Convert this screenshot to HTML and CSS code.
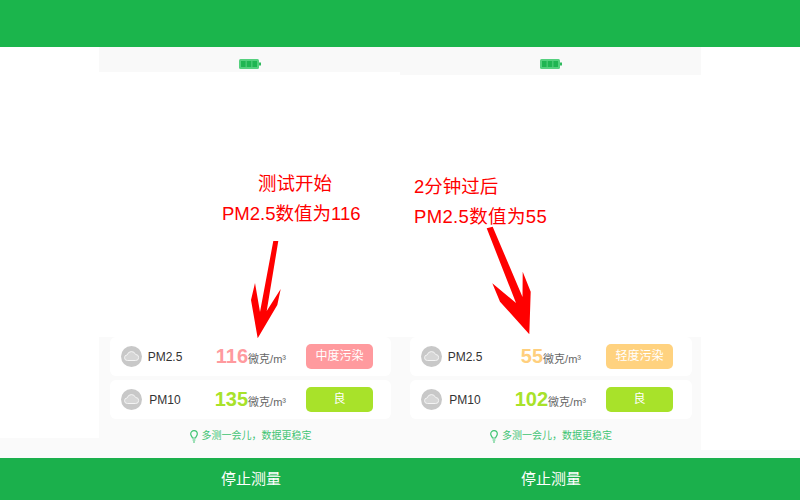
FILE: index.html
```html
<!DOCTYPE html>
<html lang="zh-CN">
<head>
    <meta charset="UTF-8">
    <title>PM2.5 测量</title>
    <link rel="stylesheet" href="styles.css">
</head>
<body>
    <div class="topbar"></div>

    <div class="main">
        <div class="side side-left"></div>

        <div class="panel panel-left">
            <div class="strip">
                <svg class="battery" viewBox="0 0 22 10"><rect width="20" height="10" rx="1.5" fill="#55d07e"/><rect x="2" y="2" width="4.6" height="6" fill="#1fb552"/><rect x="7.7" y="2" width="4.6" height="6" fill="#1fb552"/><rect x="13.4" y="2" width="4.6" height="6" fill="#1fb552"/><rect x="20" y="3.5" width="2" height="3" fill="#2fbb5e"/></svg>
            </div>
            <div class="note">
                <p class="note-first">测试开始</p>
                <p>PM2.5数值为116</p>
            </div>
            <svg class="arrow arrow-left" viewBox="250 240 32 100"><polygon points="273.3,241 278.3,241 266.7,311 280.7,289 277.3,305 257.7,338.3 251,300 255,283 260,312"/></svg>
            <div class="readings">
                <div class="card">
                    <svg class="cloud" viewBox="0 0 21 21"><circle cx="10.5" cy="10.5" r="10.5" fill="#c8c8c8"/><path d="M6.5 14.5a2.8 2.8 0 0 1-.3-5.6 4.4 4.4 0 0 1 8.4-.4 3 3 0 0 1 .1 6z" fill="#d6d6d6" stroke="#f4f4f4" stroke-width="1"/></svg>
                    <span class="name">PM2.5</span>
                    <span class="reading"><b class="num pink">116</b>微克/m³</span>
                    <span class="badge bg-pink">中度污染</span>
                </div>
                <div class="card">
                    <svg class="cloud" viewBox="0 0 21 21"><circle cx="10.5" cy="10.5" r="10.5" fill="#c8c8c8"/><path d="M6.5 14.5a2.8 2.8 0 0 1-.3-5.6 4.4 4.4 0 0 1 8.4-.4 3 3 0 0 1 .1 6z" fill="#d6d6d6" stroke="#f4f4f4" stroke-width="1"/></svg>
                    <span class="name">PM10</span>
                    <span class="reading"><b class="num lime">135</b>微克/m³</span>
                    <span class="badge bg-lime">良</span>
                </div>
                <div class="hint">
                    <svg class="pin" viewBox="0 0 8 13"><path d="M4 .7a3.3 3.3 0 0 1 3.3 3.3c0 1.500-1.300 2.500-1.800 4H2.500C2 6.500.7 5.500.7 4A3.300 3.300 0 0 1 4 .7z" fill="none" stroke="#3fc472" stroke-width="1.200"/><path d="M2.600 10h2.800M3 12h2" stroke="#3fc472" stroke-width="1.200"/></svg>
                    多测一会儿，数据更稳定
                </div>
            </div>
        </div>

        <div class="panel panel-right">
            <div class="strip">
                <svg class="battery" viewBox="0 0 22 10"><rect width="20" height="10" rx="1.5" fill="#55d07e"/><rect x="2" y="2" width="4.6" height="6" fill="#1fb552"/><rect x="7.7" y="2" width="4.6" height="6" fill="#1fb552"/><rect x="13.4" y="2" width="4.6" height="6" fill="#1fb552"/><rect x="20" y="3.5" width="2" height="3" fill="#2fbb5e"/></svg>
            </div>
            <div class="note">
                <p>2分钟过后</p>
                <p class="note-wide">PM2.5数值为55</p>
            </div>
            <svg class="arrow arrow-right" viewBox="486 226 46 110"><polygon points="486.7,228.3 492.7,226.7 522.5,297 522.7,271.7 530.7,291.7 529.3,334.3 500,301.7 492.3,283.3 516,303"/></svg>
            <div class="readings">
                <div class="card">
                    <svg class="cloud" viewBox="0 0 21 21"><circle cx="10.5" cy="10.5" r="10.5" fill="#c8c8c8"/><path d="M6.5 14.5a2.8 2.8 0 0 1-.3-5.6 4.4 4.4 0 0 1 8.4-.4 3 3 0 0 1 .1 6z" fill="#d6d6d6" stroke="#f4f4f4" stroke-width="1"/></svg>
                    <span class="name">PM2.5</span>
                    <span class="reading reading-short"><b class="num amber">55</b>微克/m³</span>
                    <span class="badge bg-amber">轻度污染</span>
                </div>
                <div class="card">
                    <svg class="cloud" viewBox="0 0 21 21"><circle cx="10.5" cy="10.5" r="10.5" fill="#c8c8c8"/><path d="M6.5 14.5a2.8 2.8 0 0 1-.3-5.6 4.4 4.4 0 0 1 8.4-.4 3 3 0 0 1 .1 6z" fill="#d6d6d6" stroke="#f4f4f4" stroke-width="1"/></svg>
                    <span class="name">PM10</span>
                    <span class="reading"><b class="num lime">102</b>微克/m³</span>
                    <span class="badge bg-lime">良</span>
                </div>
                <div class="hint">
                    <svg class="pin" viewBox="0 0 8 13"><path d="M4 .7a3.3 3.3 0 0 1 3.3 3.3c0 1.500-1.300 2.500-1.800 4H2.500C2 6.500.7 5.500.7 4A3.300 3.300 0 0 1 4 .7z" fill="none" stroke="#3fc472" stroke-width="1.200"/><path d="M2.600 10h2.800M3 12h2" stroke="#3fc472" stroke-width="1.200"/></svg>
                    多测一会儿，数据更稳定
                </div>
            </div>
        </div>

        <div class="side side-right"></div>
    </div>

    <div class="footer">
        <div class="stop">停止测量</div>
        <div class="stop">停止测量</div>
    </div>
</body>
</html>
```

FILE: styles.css
```css
* {
    box-sizing: border-box;
}
body {
    display: flex;
    flex-direction: column;
    width: 800px;
    height: 500px;
    margin: 0;
    overflow: hidden;
    background-color: #fff;
    font-family: "Liberation Sans", "Noto Sans CJK SC", sans-serif;
}
.topbar {
    height: 47px;
    background-color: #1bb54c;
}
.main {
    display: grid;
    grid-template-columns: 99px 301px 301px 99px;
    height: 411px;
}
.side-left {
    background: linear-gradient(to bottom, #fff 391px, #fafafa 391px);
}
.side-right {
    background: linear-gradient(to bottom, #fff 403px, #fafafa 403px);
}
.panel {
    position: relative;
    display: flex;
    flex-direction: column;
    background-color: #fff;
}
.strip {
    display: flex;
    justify-content: center;
    height: 25px;
    padding: 12px 0 0 1px;
    background-color: #f9f9f9;
}
.panel-right .strip {
    height: 28px;
}
.battery {
    width: 22px;
    height: 10px;
}
.note {
    flex: 1;
    padding: 97px 0 0 123px;
    color: #f00;
    font-size: 18.5px;
    line-height: 30px;
}
.note p {
    margin: 0;
}
.note .note-first {
    padding-left: 36px;
}
.note .note-wide {
    letter-spacing: .35px;
}
.panel-right .note {
    padding-left: 14px;
}
.arrow {
    position: absolute;
    fill: #f00;
}
.arrow-left {
    left: 151px;
    top: 193px;
    width: 32px;
    height: 100px;
}
.arrow-right {
    left: 86px;
    top: 179px;
    width: 46px;
    height: 110px;
}
.readings {
    display: flex;
    flex-direction: column;
    gap: 4px;
    height: 121px;
    padding: 0 9px 0 11px;
    background-color: #fafafa;
}
.panel-right .readings {
    padding-left: 10px;
}
.card {
    display: flex;
    align-items: center;
    height: 39px;
    padding-left: 11px;
    background-color: #fff;
    border-radius: 6px;
}
.cloud {
    width: 21px;
    height: 21px;
}
.name {
    width: 36px;
    margin-left: 5px;
    color: #333;
    font-size: 12px;
    text-align: center;
    white-space: nowrap;
}
.reading {
    width: 103px;
    color: #666;
    font-size: 11px;
    text-align: right;
}
.reading-short {
    padding-right: 5px;
}
.num {
    font-size: 20px;
}
.pink {
    color: #ff9a9e;
}
.amber {
    color: #ffcf7d;
}
.lime {
    color: #a8e22a;
}
.badge {
    width: 67px;
    height: 25px;
    margin-left: 20px;
    color: #fff;
    font-size: 12px;
    line-height: 25px;
    text-align: center;
    border-radius: 5px;
}
.bg-pink {
    background-color: #ff9a9e;
}
.bg-amber {
    background-color: #ffd27f;
}
.bg-lime {
    background-color: #a8e22a;
}
.hint {
    display: flex;
    justify-content: center;
    align-items: center;
    gap: 4px;
    margin-top: 5px;
    color: #3fc472;
    font-size: 10px;
    line-height: 16px;
}
.pin {
    width: 8px;
    height: 13px;
}
.footer {
    display: flex;
    height: 42px;
    padding-left: 101px;
    background-color: #1bb04c;
}
.stop {
    width: 300px;
    color: #fff;
    font-size: 15px;
    line-height: 42px;
    text-align: center;
}
```
